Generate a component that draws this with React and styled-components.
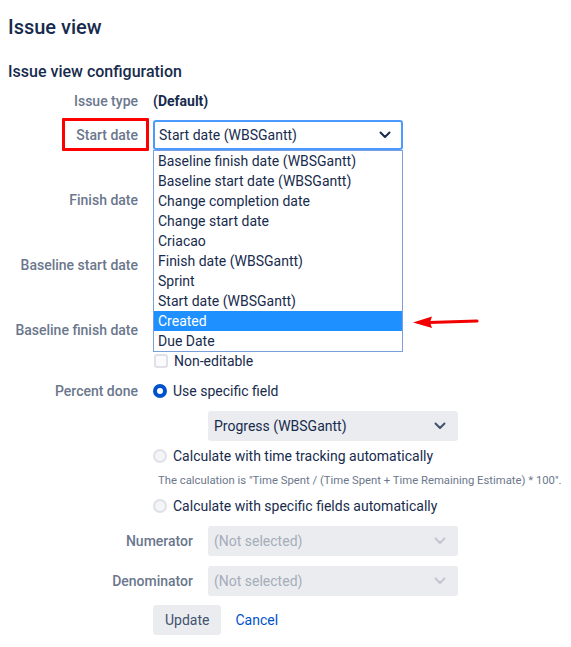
import React from 'react';
import styled, { createGlobalStyle } from 'styled-components';

const GlobalStyle = createGlobalStyle`
  body {
    margin: 0;
    background: #ffffff;
    font-family: Roboto, "Liberation Sans", Arial, sans-serif;
    color: #172b4d;
  }
`;

const dateOptions = [
  'Baseline finish date (WBSGantt)',
  'Baseline start date (WBSGantt)',
  'Change completion date',
  'Change start date',
  'Criacao',
  'Finish date (WBSGantt)',
  'Sprint',
  'Start date (WBSGantt)',
  'Created',
  'Due Date',
];

const Chevron = ({ color = '#42526e' }) => (
  <svg width="12" height="8" viewBox="0 0 12 8">
    <polyline points="1.5,1.5 6,6 10.5,1.5" fill="none" stroke={color} strokeWidth="2" strokeLinecap="round" strokeLinejoin="round" />
  </svg>
);

const App = () => {
  return (
    <Page>
      <GlobalStyle />
      <Title>Issue view</Title>
      <SubTitle>Issue view configuration</SubTitle>
      <Form>
        <Field>
          <Label>Issue type</Label>
          <Value>
            <Strong>(Default)</Strong>
          </Value>
        </Field>

        {/* rows under the open menu keep their boxes, their texts are covered */}
        <DateField label="Start date" value="Start date (WBSGantt)" focused highlight open covered />
        <DateField label="Finish date" covered />
        <DateField label="Baseline start date" covered />
        <DateField label="Baseline finish date" />

        <Field margin="1px 0 0">
          <Label>Percent done</Label>
          <Value>
            <Option>
              <Radio checked />
              Use specific field
            </Option>
            <Select variant="filled" margin="10px 0 0 55px">
              <span>Progress (WBSGantt)</span>
              <Chevron color="#42526e" />
            </Select>
            <Option margin="5px 0 0">
              <Radio />
              Calculate with time tracking automatically
            </Option>
            <Note>The calculation is "Time Spent / (Time Spent + Time Remaining Estimate) * 100".</Note>
            <Option margin="7px 0 0">
              <Radio />
              Calculate with specific fields automatically
            </Option>
          </Value>
        </Field>

        <SubField>
          <Label tall>Numerator</Label>
          <Select variant="disabled">
            <span>(Not selected)</span>
            <Chevron color="#c1c7d0" />
          </Select>
        </SubField>
        <SubField>
          <Label tall>Denominator</Label>
          <Select variant="disabled">
            <span>(Not selected)</span>
            <Chevron color="#c1c7d0" />
          </Select>
        </SubField>

        <Actions>
          <Button>Update</Button>
          <LinkButton>Cancel</LinkButton>
        </Actions>
      </Form>
    </Page>
  );
};
export default App;

const DateField = ({ label, value, focused, highlight, open, covered }) => (
  <Field>
    <Label tall>{highlight ? <Highlight>{label}</Highlight> : label}</Label>
    <Value>
      <SelectWrap>
        <Select variant={focused ? 'focused' : 'filled'}>
          <span>{value}</span>
          <Chevron color="#172b4d" />
        </Select>
        {open && (
          <Menu>
            {dateOptions.map((o) => (
              <MenuItem key={o} selected={o === 'Created'}>
                {o}
              </MenuItem>
            ))}
            <Arrow width="70" height="16" viewBox="0 0 70 16">
              <line x1="16" y1="8.5" x2="64" y2="7" stroke="#f20000" strokeWidth="3.2" strokeLinecap="round" />
              <polygon points="0,8.5 19,2.5 17,8.3 19,14" fill="#f20000" />
            </Arrow>
          </Menu>
        )}
      </SelectWrap>
      <Option margin="6px 0 0">
        <Checkbox />
        {!covered && 'Non-editable'}
      </Option>
    </Value>
  </Field>
);

const Page = styled.div`
  padding: 15px 8px 8px;
`;
const Title = styled.h1`
  margin: 0;
  font-size: 20px;
  line-height: 24px;
  font-weight: 500;
  color: #172b4d;
`;
const SubTitle = styled.h2`
  margin: 23px 0 0;
  font-size: 16px;
  line-height: 20px;
  font-weight: 500;
  color: #172b4d;
`;
const Form = styled.div`
  margin-top: 9px;
  display: flex;
  flex-direction: column;
  gap: 9px;
  font-size: 14px;
`;
const Field = styled.div`
  display: grid;
  grid-template-columns: 130px 250px;
  column-gap: 15px;
  align-items: start;
  margin: ${(p) => p.margin || '0'};
`;
const SubField = styled.div`
  display: grid;
  grid-template-columns: 185px 250px;
  column-gap: 15px;
  align-items: start;
  margin-top: 1px;
`;
const Label = styled.div`
  text-align: right;
  font-weight: 500;
  color: #6b778c;
  line-height: ${(p) => (p.tall ? '30px' : '20px')};
  white-space: nowrap;
`;
const Highlight = styled.span`
  position: relative;
  display: inline-block;
  &::after {
    content: '';
    position: absolute;
    top: -2px;
    bottom: -1px;
    left: -14px;
    right: -11px;
    border: 3px solid #ff0000;
    border-radius: 1px;
  }
`;
const Value = styled.div`
  display: flex;
  flex-direction: column;
  align-items: flex-start;
  line-height: 20px;
`;
const Strong = styled.span`
  font-weight: 700;
  color: #172b4d;
`;
const SelectWrap = styled.div`
  position: relative;
  width: 250px;
`;
const Select = styled.div`
  box-sizing: border-box;
  width: 250px;
  height: 30px;
  margin: ${(p) => p.margin || '0'};
  display: flex;
  align-items: center;
  justify-content: space-between;
  border-radius: 3px;
  font-size: 14px;
  padding: ${(p) => (p.variant === 'focused' ? '0 10px 0 4px' : '0 12px 0 6px')};
  border: ${(p) => (p.variant === 'focused' ? '2px solid #4c9aff' : 'none')};
  background: ${(p) => (p.variant === 'focused' ? '#ffffff' : '#ebecf0')};
  color: ${(p) => (p.variant === 'disabled' ? '#a5adba' : '#172b4d')};
`;
const Menu = styled.div`
  position: absolute;
  top: 100%;
  left: 0;
  width: 250px;
  box-sizing: border-box;
  border: 1px solid #7a9fdc;
  background: #ffffff;
  z-index: 5;
`;
const MenuItem = styled.div`
  height: 20px;
  line-height: 20px;
  padding-left: 4px;
  font-size: 14px;
  color: ${(p) => (p.selected ? '#ffffff' : '#172b4d')};
  background: ${(p) => (p.selected ? '#1e90ff' : 'transparent')};
  white-space: nowrap;
`;
const Arrow = styled.svg`
  position: absolute;
  left: calc(100% + 11px);
  top: 163px;
`;
const Option = styled.div`
  display: flex;
  align-items: center;
  gap: 6px;
  height: 20px;
  margin: ${(p) => p.margin || '0'};
  color: #172b4d;
  white-space: nowrap;
`;
const Checkbox = styled.span`
  box-sizing: border-box;
  width: 14px;
  height: 14px;
  margin-left: 1px;
  border: 2px solid #dfe1e6;
  background: #fafbfc;
  border-radius: 3px;
`;
const Radio = styled.span`
  box-sizing: border-box;
  width: 14px;
  height: 14px;
  border-radius: 50%;
  border: ${(p) => (p.checked ? '4px solid #0052cc' : '2px solid #dfe1e6')};
  background: ${(p) => (p.checked ? '#ffffff' : '#f4f5f7')};
`;
const Note = styled.div`
  margin: 7px 0 0 5px;
  font-size: 11.3px;
  line-height: 16px;
  color: #6b778c;
  white-space: nowrap;
`;
const Actions = styled.div`
  display: flex;
  align-items: center;
  gap: 14px;
  margin-left: 145px;
`;
const Button = styled.button`
  height: 30px;
  padding: 0 12px;
  border: none;
  border-radius: 3px;
  background: #ebecf0;
  color: #42526e;
  font-family: inherit;
  font-size: 14px;
`;
const LinkButton = styled.a`
  color: #0052cc;
  font-size: 14px;
  cursor: pointer;
`;
